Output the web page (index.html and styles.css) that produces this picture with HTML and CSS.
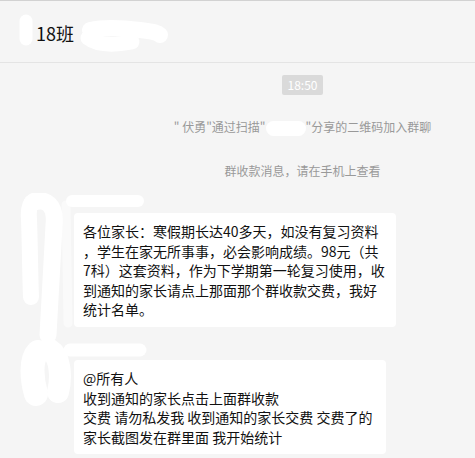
FILE: index.html
```html
<!DOCTYPE html>
<html lang="zh-CN">
<head>
<meta charset="utf-8"/>
<meta content="width=device-width, initial-scale=1.0" name="viewport"/>
<title>18班</title>
<link rel="stylesheet" href="styles.css">
</head>
<body>
    <div class="header">
        <span class="title">18班</span>
        <!-- 打码 -->
        <svg class="mask mask-title" width="180" height="62" viewBox="0 0 180 62">
            <path d="M26 21 L26 39" stroke="#fff" stroke-width="13" stroke-linecap="round" fill="none"/>
            <path d="M90 30 C104 27 124 28 140 30 S158 33 160 35" stroke="#fff" stroke-width="16" stroke-linecap="round" fill="none"/>
            <path d="M88 38 C98 46 116 45 132 42" stroke="#fff" stroke-width="15" stroke-linecap="round" fill="none"/>
        </svg>
    </div>

    <div class="chat">
        <div class="sys"><span class="time">18:50</span></div>
        <div class="sys sys-text">
            " 伏勇"通过扫描"<span class="blank"></span>"分享的二维码加入群聊
        </div>
        <div class="sys sys-text">群收款消息，请在手机上查看</div>

        <div class="msg">
            <svg class="mask" width="150" height="150" viewBox="0 0 150 150">
                <path d="M72 8 L138 8" stroke="#fff" stroke-width="12" stroke-linecap="round" fill="none"/>
                <path d="M38 7 C30 7 28 16 29 26 C30 52 30 80 31 104" stroke="#fff" stroke-width="16" stroke-linecap="round" fill="none"/>
                <path d="M32 10 C46 4 56 12 54 32 C52 70 50 110 48 142" stroke="#fff" stroke-width="17" stroke-linecap="round" fill="none"/>
                <path d="M66 12 L68 130" stroke="#fff" stroke-width="9" stroke-linecap="round" fill="none" opacity="0.5"/>
            </svg>
            <div class="name"></div>
            <div class="bubble bubble-wide">
                各位家长：寒假期长达40多天，如没有复习资料<br>
                ，学生在家无所事事，必会影响成绩。98元（共<br>
                7科）这套资料，作为下学期第一轮复习使用，收<br>
                到通知的家长请点上那面那个群收款交费，我好<br>
                统计名单。
            </div>
        </div>

        <div class="msg">
            <svg class="mask" width="150" height="70" viewBox="0 0 150 70">
                <path d="M70 10 L140 10" stroke="#fff" stroke-width="13" stroke-linecap="round" fill="none"/>
                <path d="M38 12 C30 20 32 40 36 54" stroke="#fff" stroke-width="24" stroke-linecap="round" fill="none"/>
                <path d="M50 10 C60 16 62 36 58 52" stroke="#fff" stroke-width="22" stroke-linecap="round" fill="none"/>
            </svg>
            <div class="name"></div>
            <div class="bubble bubble-narrow">
                @所有人<br>
                收到通知的家长点击上面群收款<br>
                交费 请勿私发我 收到通知的家长交费 交费了的<br>
                家长截图发在群里面 我开始统计
            </div>
        </div>
    </div>
</body>
</html>
```

FILE: styles.css
```css
body {
    margin: 0;
    background-color: #f5f5f5;
    font-family: "Noto Sans CJK SC", "Microsoft YaHei", sans-serif;
    color: #111;
    overflow: hidden;
}

/* 顶部标题栏 */
.header {
    position: relative;
    height: 63px;
    box-sizing: border-box;
    padding-left: 36px;
    padding-top: 2px;
    border-top: 1px solid #d2d2d2;
    border-bottom: 1px solid #e4e4e4;
    display: flex;
    align-items: center;
}

.title {
    font-size: 18px;
    color: #111;
}

.mask {
    position: absolute;
    left: 0;
    top: 0;
}

.mask-title {
    top: -1px;
}

/* 聊天区 */
.chat {
    padding-top: 12px;
}

.sys {
    padding-left: 130px;
    text-align: center;
    font-size: 12px;
    line-height: 20px;
}

.sys-text {
    color: #999;
    margin-top: 22px;
}

.sys-text + .sys-text {
    margin-top: 24px;
}

.time {
    display: inline-block;
    height: 20px;
    line-height: 20px;
    padding: 0 6px;
    background-color: #dadada;
    color: #fff;
    border-radius: 2px;
}

.blank {
    display: inline-block;
    width: 40px;
    height: 15px;
    vertical-align: middle;
    background-color: #fff;
    border-radius: 8px;
}

.msg {
    position: relative;
    padding-left: 74px;
    margin-top: 12px;
}

.msg + .msg {
    margin-top: 13px;
}

.name {
    height: 20px;
}

.bubble {
    position: relative;
    display: inline-block;
    box-sizing: border-box;
    background-color: #fff;
    border-radius: 4px;
    padding: 9px 10px 7px 9px;
    font-size: 14px;
    line-height: 19.6px;
    color: #111;
}

.bubble-wide {
    width: 322px;
}

.bubble-narrow {
    width: 312px;
}
```
